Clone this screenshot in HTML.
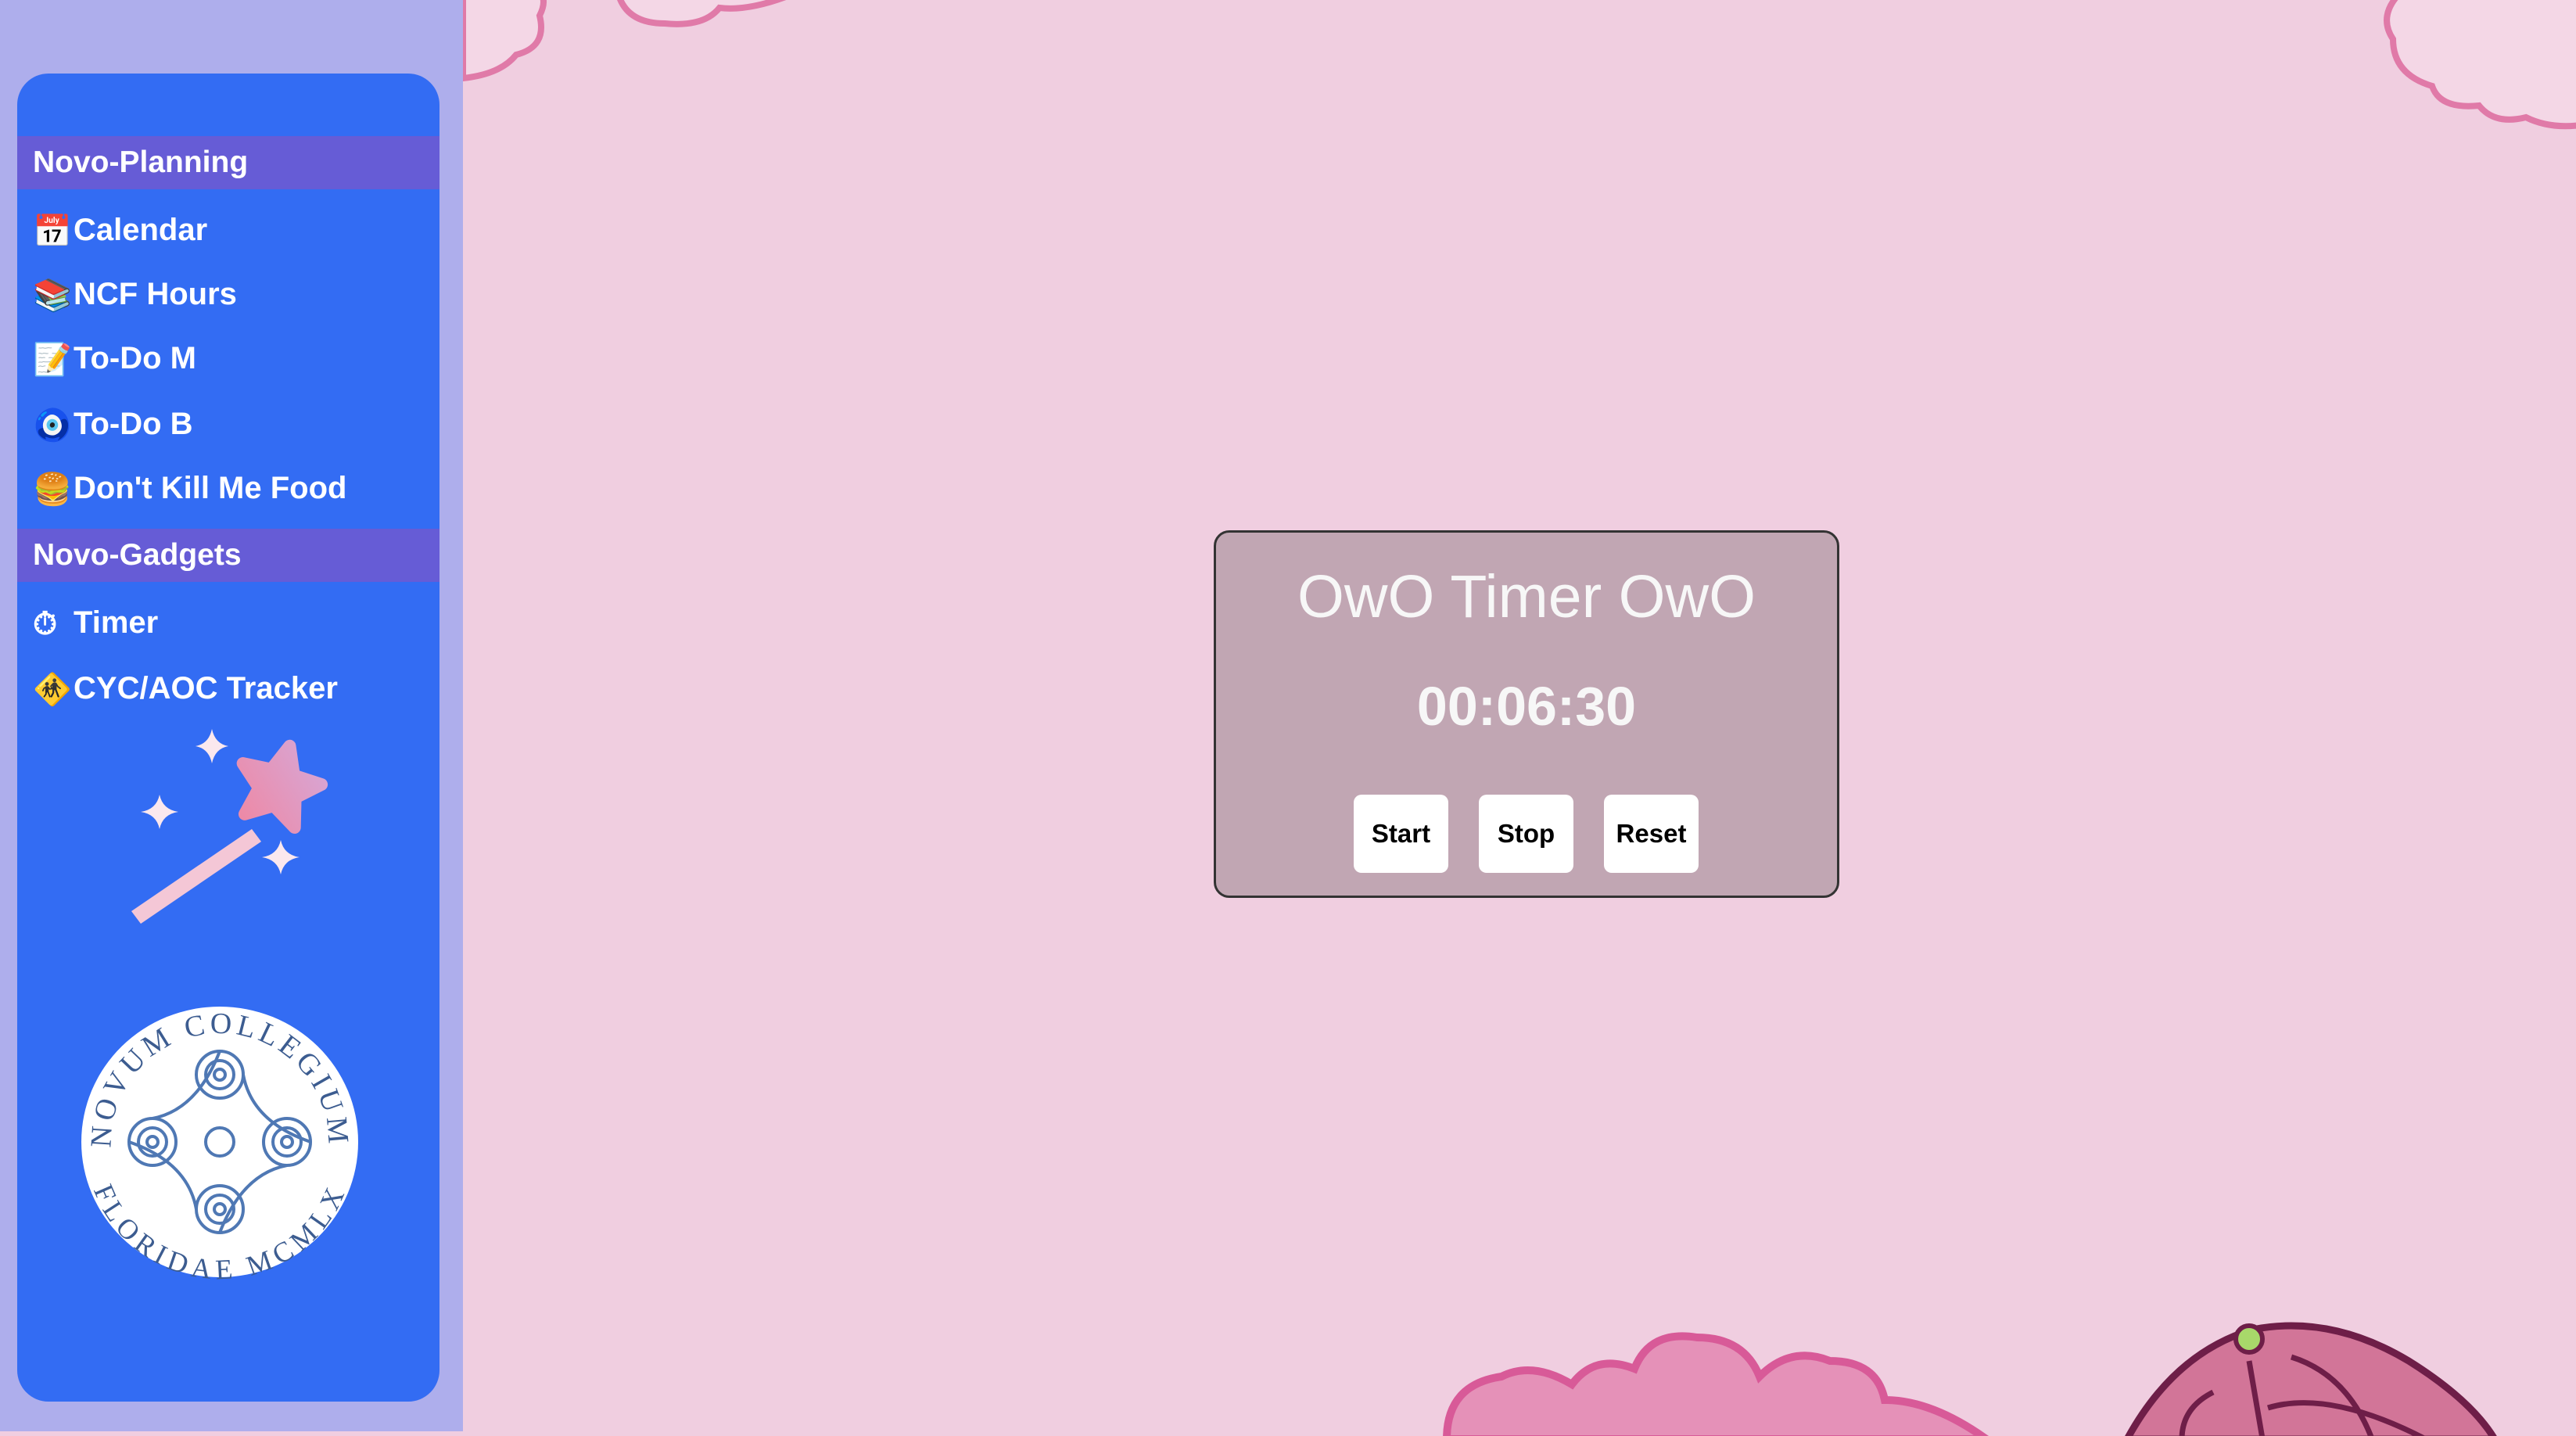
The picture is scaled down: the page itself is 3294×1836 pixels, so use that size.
<!DOCTYPE html>
<html><head><meta charset="utf-8"><style>
*{margin:0;padding:0;box-sizing:border-box}
body{width:3294px;height:1836px;overflow:hidden;background:#f0cee0;font-family:"Liberation Sans",sans-serif;position:relative}
#side{position:absolute;left:0;top:0;width:592px;height:1830px;background:#aeaeec}
#panel{position:absolute;left:22px;top:94px;width:540px;height:1698px;background:#336cf3;border-radius:40px}
.hd{position:absolute;left:0;width:540px;height:68px;background:#665cd6;color:#fff;font-weight:bold;font-size:39px;line-height:68px;padding-left:20px}
.it{position:absolute;left:20px;color:#fff;font-weight:bold;font-size:40px;line-height:60px;white-space:nowrap}
.it span{display:inline-block;width:52px;font-size:40px;vertical-align:-2px}
#box{position:absolute;left:1552px;top:678px;width:800px;height:470px;background:#c1a6b3;border:3px solid #333;border-radius:20px;text-align:center;color:#f7f7f7}
#box h1{position:absolute;top:38px;width:100%;font-weight:normal;font-size:77px}
#box .t{position:absolute;top:182px;width:100%;font-weight:bold;font-size:70px}
.b{position:absolute;top:335px;width:121px;height:100px;background:#fff;border-radius:10px;color:#000;font-weight:bold;font-size:33px;line-height:100px;text-align:center}
</style></head><body>
<svg style="position:absolute;left:0;top:0" width="3294" height="1836">
<g fill="#f4d7e6" stroke="#e07aa8" stroke-width="8">
<path d="M592 100 Q640 95 660 70 Q700 60 690 20 Q700 0 690 -10 L592 -10Z"/>
<path d="M790 -10 Q800 30 850 30 Q900 35 920 10 Q960 15 1020 -10Z"/>
<path d="M3300 160 Q3260 165 3230 150 Q3190 160 3170 135 Q3120 140 3110 110 Q3060 95 3060 50 Q3040 20 3070 -10 L3300 -10Z"/>
</g>
<g fill="#e591b8" stroke="#d85a98" stroke-width="10">
<path d="M1850 1840 Q1850 1770 1920 1760 Q1960 1740 2010 1770 Q2040 1730 2090 1750 Q2110 1700 2170 1710 Q2230 1710 2250 1760 Q2290 1720 2340 1740 Q2400 1740 2410 1790 Q2470 1790 2540 1840Z"/>
</g>
<path d="M2720 1840 Q2780 1730 2880 1700 Q2980 1680 3080 1740 Q3160 1790 3190 1840Z" fill="#d27598" stroke="#6e1e48" stroke-width="9"/>
<g stroke="#6e1e48" stroke-width="7" fill="none"><path d="M2876 1740 L2900 1880"/><path d="M2930 1735 Q3010 1760 3040 1860"/><path d="M2830 1780 Q2790 1800 2790 1840"/><path d="M2900 1800 Q3000 1770 3170 1880"/></g>
<circle cx="2876" cy="1712" r="17" fill="#a8d86a" stroke="#6e1e48" stroke-width="6"/>
</svg>
<div id="side"><div id="panel">
<div class="hd" style="top:80px">Novo-Planning</div>
<div class="it" style="top:170px"><span>📅</span>Calendar</div>
<div class="it" style="top:252px"><span>📚</span>NCF Hours</div>
<div class="it" style="top:334px"><span>📝</span>To-Do M</div>
<div class="it" style="top:418px"><span>🧿</span>To-Do B</div>
<div class="it" style="top:500px"><span>🍔</span>Don't Kill Me Food</div>
<div class="hd" style="top:582px">Novo-Gadgets</div>
<div class="it" style="top:672px"><span>⏱</span>Timer</div>
<div class="it" style="top:756px"><span>🚸</span>CYC/AOC Tracker</div>
<svg style="position:absolute;left:0;top:0" width="540" height="1698">
<defs><linearGradient id="g" x1="0" y1="1" x2="1" y2="0"><stop offset="0" stop-color="#ee88a4"/><stop offset="1" stop-color="#d6a8d8"/></linearGradient>
<path id="tp" d="M120 1366 A139 139 0 0 1 398 1366"/>
<path id="bp" d="M100 1370 A159 159 0 0 0 418 1370"/></defs>
<path d="M146 1071 L300 966 L312 982 L158 1087Z" fill="#f4c7d6"/>
<g transform="translate(335 910) rotate(15)">
<path d="M0 -52 L15 -17 L52 -15 L24 10 L33 47 L0 27 L-33 47 L-24 10 L-52 -15 L-15 -17Z" fill="url(#g)" stroke="url(#g)" stroke-width="16" stroke-linejoin="round"/></g>
<g fill="#fbe8ee"><path d="M249 838 Q253 857 270 860 Q253 863 249 882 Q245 863 228 860 Q245 857 249 838Z"/>
<path d="M182 922 Q186 941 206 944 Q186 947 182 966 Q178 947 158 944 Q178 941 182 922Z"/>
<path d="M337 980 Q341 999 361 1002 Q341 1005 337 1024 Q333 1005 313 1002 Q333 999 337 980Z"/></g>
<ellipse cx="259" cy="1366" rx="177" ry="173" fill="#fff"/>
<g fill="none" stroke="#4f78b4" stroke-width="4">
<circle cx="259" cy="1366" r="18"/><circle cx="259" cy="1280" r="30"/><circle cx="259" cy="1280" r="18"/><circle cx="259" cy="1280" r="7"/><circle cx="259" cy="1452" r="30"/><circle cx="259" cy="1452" r="18"/><circle cx="259" cy="1452" r="7"/><circle cx="173" cy="1366" r="30"/><circle cx="173" cy="1366" r="18"/><circle cx="173" cy="1366" r="7"/><circle cx="345" cy="1366" r="30"/><circle cx="345" cy="1366" r="18"/><circle cx="345" cy="1366" r="7"/>
<path d="M289 1280 Q300 1340 375 1366 M229 1452 Q218 1392 143 1366 M173 1336 Q230 1325 259 1250 M345 1396 Q288 1407 259 1482"/>
</g>
<text font-family="Liberation Serif" font-size="38" fill="#3c5c90" letter-spacing="5"><textPath href="#tp" startOffset="50%" text-anchor="middle">NOVUM COLLEGIUM</textPath></text>
<text font-family="Liberation Serif" font-size="36" fill="#3c5c90" letter-spacing="5" dy="12"><textPath href="#bp" startOffset="50%" text-anchor="middle">FLORIDAE MCMLX</textPath></text>
</svg>
</div></div>
<div id="box"><h1>OwO Timer OwO</h1><div class="t">00:06:30</div>
<div class="b" style="left:176px">Start</div><div class="b" style="left:336px">Stop</div><div class="b" style="left:496px">Reset</div></div>
</body></html>
